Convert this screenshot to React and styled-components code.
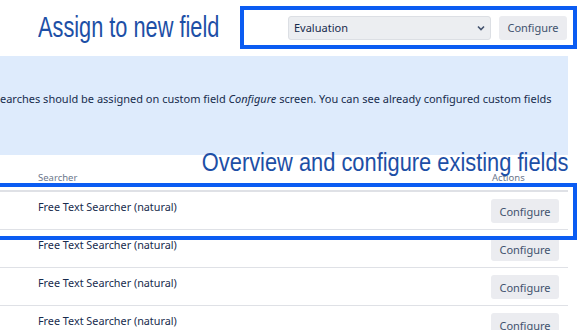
import React from "react";
import styled, { createGlobalStyle } from "styled-components";

const Global = createGlobalStyle`
  html, body { margin: 0; padding: 0; background: #fff; }
  body { font-family: "Noto Sans", "Open Sans", sans-serif; color: #172b4d; }
`;

const ANNOT = "#0b5cf2";
const HEAD = "#1d4fa6";

const Page = styled.div`
  position: relative;
  width: 580px;
  height: 330px;
  overflow: hidden;
  background: #fff;
`;

const TopBar = styled.div`
  display: flex;
  align-items: flex-start;
  height: 56px;
`;

const AnnotTitle = styled.div`
  font-family: "Liberation Sans", Arial, sans-serif;
  color: ${HEAD};
  font-size: ${(p) => p.$size || 29}px;
  line-height: 1;
  white-space: nowrap;
  transform: scaleX(${(p) => p.$scale || 0.75});
  transform-origin: ${(p) => (p.$right ? "right" : "left")} center;
`;

const TitleSlot = styled.div`
  width: 202px;
  padding: 13px 0 0 38px;
`;

const AnnotBox = styled.div`
  margin-top: 6px;
  width: 337px;
  height: 43px;
  box-sizing: border-box;
  border: 4px solid ${ANNOT};
  display: flex;
  align-items: center;
  justify-content: flex-end;
  gap: 8px;
  padding-right: 6px;
`;

const Select = styled.div`
  width: 203px;
  height: 24px;
  box-sizing: border-box;
  border: 1px solid #dcdfe4;
  border-radius: 3px;
  background: #eceef1;
  display: flex;
  align-items: center;
  justify-content: space-between;
  padding: 0 5px 0 5px;
  font-size: 11px;
  color: #172b4d;
`;

const Button = styled.div`
  height: 24px;
  padding: 0 8px;
  border-radius: 3px;
  background: #ebecf0;
  color: #42526e;
  font-size: 11px;
  display: flex;
  align-items: center;
  justify-content: center;
  box-sizing: border-box;
  width: ${(p) => p.$w || 68}px;
`;

const InfoPanel = styled.div`
  width: 568px;
  height: 99px;
  background: #deebfc;
  box-sizing: border-box;
  padding-top: 35px;
  font-size: 11px;
  color: #172b4d;
  white-space: nowrap;
  overflow: hidden;
`;

const HeadingRow = styled.div`
  width: 568px;
  display: flex;
  justify-content: flex-end;
  margin-top: -6px;
  height: 22px;
`;

const Table = styled.div`
  width: 568px;
`;

const HeaderRow = styled.div`
  display: grid;
  grid-template-columns: 1fr 76px;
  height: 21px;
  box-sizing: border-box;
  padding-top: 2px;
  border-bottom: 2px solid #dfe1e6;
  font-size: 9.5px;
  color: #6b778c;
  line-height: 10px;
`;

const HeadCell = styled.div`
  padding-left: ${(p) => p.$pl || 0}px;
`;

const Row = styled.div`
  display: grid;
  grid-template-columns: 1fr 77px;
  height: 38px;
  box-sizing: border-box;
  border-bottom: 1px solid #dfe1e6;
  font-size: 10.8px;
  color: #172b4d;
`;

const Cell = styled.div`
  padding-left: 38px;
  padding-top: 7px;
  white-space: nowrap;
`;

const ActionCell = styled.div`
  padding-top: 7px;
`;

const Highlight = styled.div`
  position: absolute;
  left: -4px;
  top: 183px;
  width: 581px;
  height: 57px;
  box-sizing: border-box;
  border: 4px solid ${ANNOT};
  pointer-events: none;
`;

const Chevron = () => (
  <svg width="8" height="6" viewBox="0 0 8 6">
    <path d="M1 1.5 L4 4.5 L7 1.5" fill="none" stroke="#42526e" strokeWidth="1.6" />
  </svg>
);

export default function App() {
  const rows = [0, 1, 2, 3];
  return (
    <Page>
      <Global />
      <TopBar>
        <TitleSlot>
          <AnnotTitle>Assign to new field</AnnotTitle>
        </TitleSlot>
        <AnnotBox>
          <Select>
            <span>Evaluation</span>
            <Chevron />
          </Select>
          <Button>Configure</Button>
        </AnnotBox>
      </TopBar>
      <InfoPanel>
        earches should be assigned on custom field <em>Configure</em> screen. You can see already configured custom fields
      </InfoPanel>
      <HeadingRow>
        <AnnotTitle $right $size={26} $scale={0.84}>
          Overview and configure existing fields
        </AnnotTitle>
      </HeadingRow>
      <Table>
        <HeaderRow>
          <HeadCell $pl={38}>Searcher</HeadCell>
          <HeadCell>Actions</HeadCell>
        </HeaderRow>
        {rows.map((r) => (
          <Row key={r}>
            <Cell>Free Text Searcher (natural)</Cell>
            <ActionCell>
              <Button>Configure</Button>
            </ActionCell>
          </Row>
        ))}
      </Table>
      <Highlight />
    </Page>
  );
}
